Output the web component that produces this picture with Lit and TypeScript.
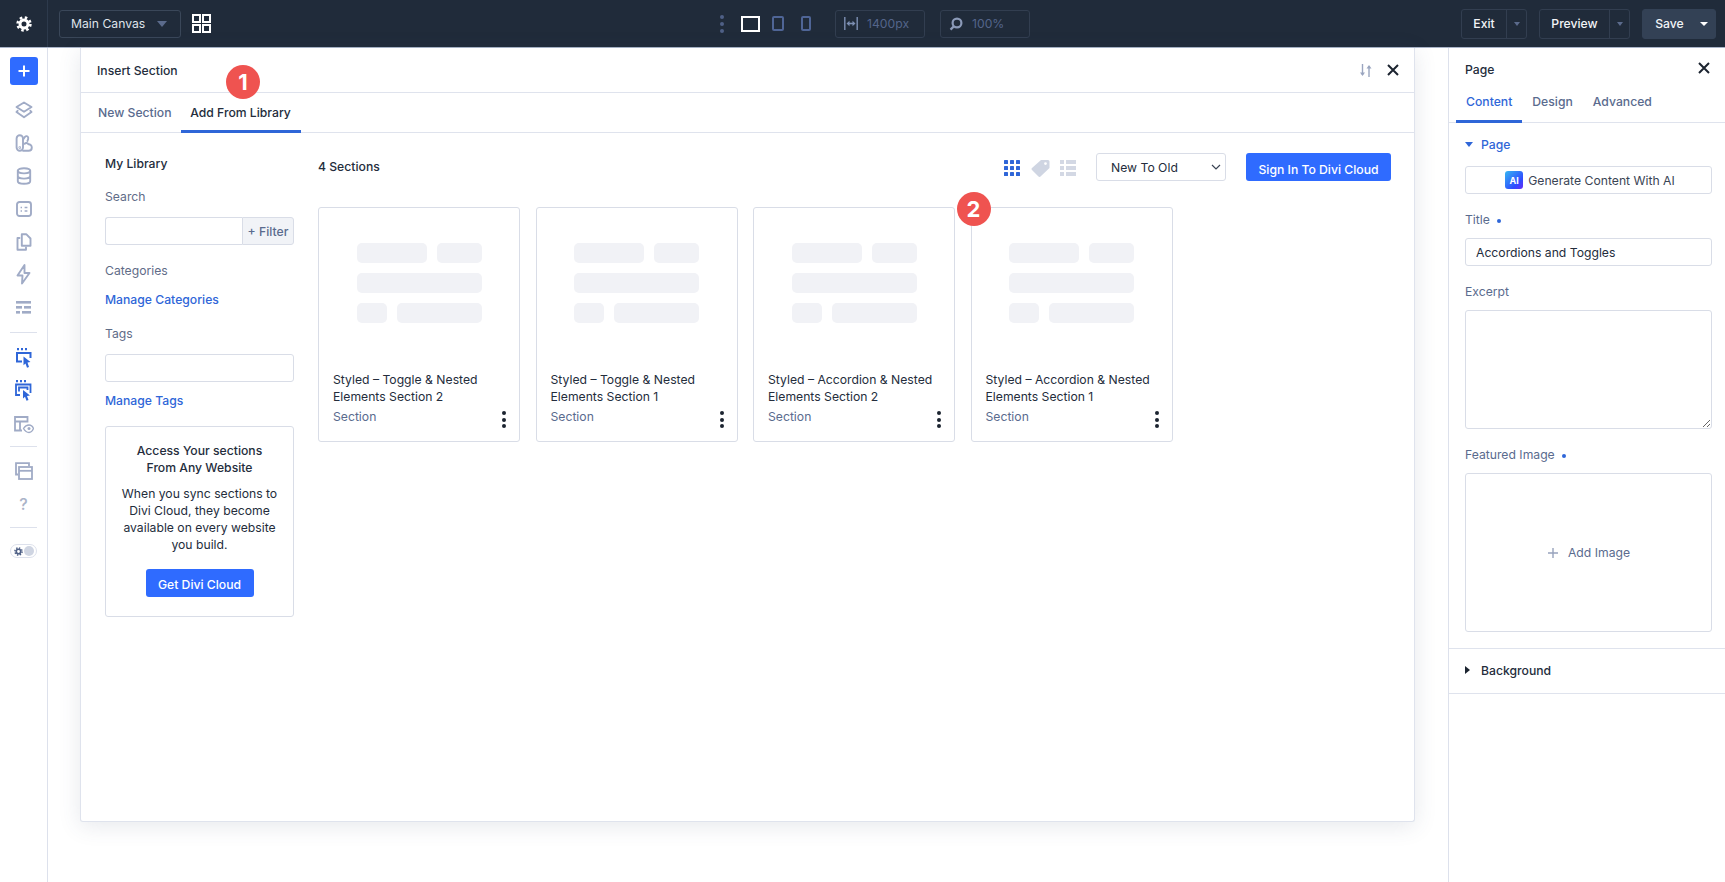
import { LitElement, css, html, svg, type TemplateResult } from "lit";
import { customElement } from "lit/decorators.js";

const side = (w: number, h: number, body: TemplateResult | ReturnType<typeof svg>) =>
  html`<svg width=${w} height=${h} viewBox="0 0 ${w} ${h}" fill="none" stroke="currentColor" stroke-width="1.9" stroke-linejoin="round" stroke-linecap="round">${body}</svg>`;

const icons = {
  gear: html`<svg width="16" height="16" viewBox="0 0 16 16" fill="none" stroke="#fff"><circle cx="8" cy="8" r="4" stroke-width="3"/><circle cx="8" cy="8" r="6.4" stroke-width="2.6" stroke-dasharray="2.5 2.53"/></svg>`,
  grid: html`<svg width="19" height="19" viewBox="0 0 19 19" fill="none" stroke="#fff" stroke-width="2"><rect x="1" y="1" width="7" height="7"/><rect x="11" y="1" width="7" height="7"/><rect x="1" y="11" width="7" height="7"/><rect x="11" y="11" width="7" height="7"/></svg>`,
  layers: side(18, 18, svg`<path d="M9 1.5 16.5 6 9 10.8 1.5 6Z"/><path d="M2.6 9.8 1.5 11 9 16.2 16.5 11 15.4 9.8"/>`),
  library: side(18, 18, svg`<rect x="1.6" y="1.2" width="6.4" height="15.6" rx="3.2"/><path d="M8 5.6 10 2.8C11 1.6 12.8 2 13.2 3.4 13.5 4.6 13 5.8 12.4 7"/><path d="M8 16.8H13.6C15.6 16.8 16.8 15.2 16.8 13.4 16.8 11.2 15 10 13.4 10.2 12.6 8.8 10.6 8.6 9.6 9.8"/><circle cx="4.8" cy="13.6" r=".4"/>`),
  db: side(16, 18, svg`<ellipse cx="8" cy="3.8" rx="6.2" ry="2.6"/><path d="M1.8 3.8V14.2C1.8 15.6 4.6 16.8 8 16.8S14.2 15.6 14.2 14.2V3.8M1.8 9C1.8 10.4 4.6 11.6 8 11.6S14.2 10.4 14.2 9"/>`),
  face: html`<svg width="16" height="16" viewBox="0 0 16 16" fill="none" stroke="currentColor" stroke-width="1.9"><rect x="1" y="1" width="14" height="14" rx="2.5"/><path d="M4.6 6.4h1.4M8.6 6.4h2.8M4.6 10h1.4M8.6 10h2.8" stroke-width="1.5"/></svg>`,
  copy: side(16, 18, svg`<path d="M5.8 1.2H10.2L14.5 5.5V12.8H5.8Z"/><path d="M3.5 5H1.5V16.8H10V14.5"/>`),
  bolt: side(15, 21, svg`<path d="M8.5 1 1.5 11.5H6.5L6 19.5 13.5 9H8.5Z"/>`),
  lines: html`<svg width="15" height="13" viewBox="0 0 15 13" fill="currentColor"><rect width="15" height="2.6"/><rect y="5" width="6" height="2.6"/><rect x="8" y="5" width="7" height="2.6"/><rect y="10" width="4" height="2.6"/><rect x="6" y="10" width="9" height="2.6"/></svg>`,
  cursor1: html`<svg width="16" height="20" viewBox="0 0 16 20" fill="none" stroke="currentColor"><path d="M1 1h2M5 1h2M9 1h2" stroke-width="2.4"/><path d="M6 13.5H1V5h13.5v5" stroke-width="2"/><path d="M7.5 8.5 14.5 14 11.5 14.6 13 19 11 19.7 9.5 15.5 7.5 17.2Z" fill="currentColor" stroke="none"/></svg>`,
  cursor2: html`<svg width="17" height="21" viewBox="0 0 17 21" fill="none" stroke="currentColor"><path d="M1 1h2M5 1h2M9 1h2" stroke-width="2.4"/><path d="M5 15H1V4.5h14.5V13" stroke-width="1.8"/><path d="M4 11.5V7.5H12.5V10" stroke-width="1.8"/><path d="M8 10 15 15.5 12 16 13.5 20 11.5 20.8 10 16.8 8 18.5Z" fill="currentColor" stroke="none"/></svg>`,
  layoutEye: html`<svg width="20" height="18" viewBox="0 0 20 18" fill="none" stroke="currentColor" stroke-width="1.8"><path d="M8 14.5H1V1h12.5v5.5M1 5.5h12.5M6 5.5v9"/><path d="M9.5 12.5C11 10 13 9 15 9s3.5 1 4.5 3.5C18.5 15 17 16.5 15 16.5s-4-1.5-5.5-4Z" stroke-width="1.4"/><circle cx="15" cy="12.6" r="1.5" fill="currentColor" stroke="none"/></svg>`,
  windows: html`<svg width="18" height="18" viewBox="0 0 18 18" fill="none" stroke="currentColor" stroke-width="1.8"><path d="M3 12.5H1V1.2h13V4"/><rect x="4" y="5" width="13" height="12"/><path d="M4 8.8h13"/></svg>`,
  widthArrows: html`<svg width="14" height="13" viewBox="0 0 14 13" fill="none"><path d="M.8 0v13M13.2 0v13" stroke="#7d8fb3" stroke-width="1.4"/><path d="M2.5 6.5 5.5 3.8v5.4ZM11.5 6.5 8.5 3.8v5.4Z" fill="#7d8fb3"/><path d="M5 6.5h4" stroke="#7d8fb3" stroke-width="1.6"/></svg>`,
  search: html`<svg width="14" height="14" viewBox="0 0 14 14" fill="none" stroke="#8b9ab8"><circle cx="8" cy="6" r="4.4" stroke-width="2.2"/><path d="M4.8 9.4 1.5 12.6" stroke-width="2.2"/></svg>`,
  sort: html`<svg width="13" height="13" viewBox="0 0 13 13" fill="none" stroke="#9aa5bf" stroke-width="1.4"><path d="M3.5 0v11"/><path d="M1 8.5 3.5 12 6 8.5Z" fill="#9aa5bf" stroke="none"/><path d="M10 13V2"/><path d="M7.5 4.5 10 1l2.5 3.5Z" fill="#9aa5bf" stroke="none"/></svg>`,
  close: html`<svg width="12" height="12" viewBox="0 0 12 12" fill="none" stroke="#1c2430" stroke-width="2"><path d="M1 1l10 10M11 1 1 11"/></svg>`,
  dotsGrid: html`<svg width="16" height="16" viewBox="0 0 16 16" fill="#2f66d8"><rect width="4" height="4" rx=".6"/><rect x="6" width="4" height="4" rx=".6"/><rect x="12" width="4" height="4" rx=".6"/><rect y="6" width="4" height="4" rx=".6"/><rect x="6" y="6" width="4" height="4" rx=".6"/><rect x="12" y="6" width="4" height="4" rx=".6"/><rect y="12" width="4" height="4" rx=".6"/><rect x="6" y="12" width="4" height="4" rx=".6"/><rect x="12" y="12" width="4" height="4" rx=".6"/></svg>`,
  tag: html`<svg class="tag" width="19" height="18" viewBox="0 0 19 18" fill="#cfd5e2"><path d="M10 1h7a1.5 1.5 0 0 1 1.5 1.5V9L9.5 17.5a1.4 1.4 0 0 1-2 0L1 11a1.4 1.4 0 0 1 0-2Zm4.5 2.2a1.4 1.4 0 1 0 0 2.8 1.4 1.4 0 0 0 0-2.8Z" fill-rule="evenodd"/></svg>`,
  list: html`<svg width="16" height="16" viewBox="0 0 16 16" fill="#d3d8e4"><rect width="4" height="4"/><rect x="6" width="10" height="4"/><rect y="6" width="4" height="4"/><rect x="6" y="6" width="10" height="4"/><rect y="12" width="4" height="4"/><rect x="6" y="12" width="10" height="4"/></svg>`,
  chevron: html`<svg width="10" height="6" viewBox="0 0 10 6" fill="none" stroke="#3a4454" stroke-width="1.2"><path d="M1 1l4 4 4-4"/></svg>`,
  plus: html`<svg width="12" height="12" viewBox="0 0 12 12" fill="none" stroke="#98a3bd" stroke-width="1.4"><path d="M6 1v10M1 6h10"/></svg>`,
};

const cards = [
  ["Styled – Toggle & Nested", "Elements Section 2"],
  ["Styled – Toggle & Nested", "Elements Section 1"],
  ["Styled – Accordion & Nested", "Elements Section 2"],
  ["Styled – Accordion & Nested", "Elements Section 1"],
];

@customElement("app-root")
export class AppRoot extends LitElement {
  render(): TemplateResult {
    return html`
      ${this.topbar()}
      <div class="body">
        ${this.sidebar()}
        <div class="canvas">${this.modal()}</div>
        ${this.panel()}
      </div>
    `;
  }

  topbar() {
    return html`<header class="top">
      <div class="gear">${icons.gear}</div>
      <div class="canvas-select">Main Canvas<span class="caret dim"></span></div>
      <div class="grid-icon">${icons.grid}</div>
      <div class="center">
        <span class="vdots"><i></i><i></i><i></i></span>
        <span class="desktop"></span>
        <span class="tablet"></span>
        <span class="phone"></span>
        <div class="box first">${icons.widthArrows}<span>1400px</span></div>
        <div class="box">${icons.search}<span>100%</span></div>
      </div>
      <div class="actions">
        <div class="split"><span class="lbl exit">Exit</span><span class="arrow"><span class="caret tiny"></span></span></div>
        <div class="split"><span class="lbl preview">Preview</span><span class="arrow"><span class="caret tiny"></span></span></div>
        <div class="split save"><span class="lbl">Save</span><span class="caret white"></span></div>
      </div>
    </header>`;
  }

  sidebar() {
    return html`<nav class="side">
      <div class="add"><svg width="12" height="12" viewBox="0 0 12 12" fill="none" stroke="#fff" stroke-width="2"><path d="M6 .5v11M.5 6h11"/></svg></div>
      <div class="si">${icons.layers}</div>
      <div class="si">${icons.library}</div>
      <div class="si">${icons.db}</div>
      <div class="si">${icons.face}</div>
      <div class="si">${icons.copy}</div>
      <div class="si">${icons.bolt}</div>
      <div class="si">${icons.lines}</div>
      <hr class="h1" />
      <div class="si blue">${icons.cursor1}</div>
      <div class="si blue">${icons.cursor2}</div>
      <div class="si eye">${icons.layoutEye}</div>
      <hr class="h2" />
      <div class="si">${icons.windows}</div>
      <div class="si q">?</div>
      <hr class="h3" />
      <div class="toggle"><span class="tg">${icons.gear}</span><span class="knob"></span></div>
    </nav>`;
  }

  modal() {
    return html`<section class="modal">
      <div class="m-head">
        <span class="m-title">Insert Section</span>
        <span class="badge one">1</span>
        <span class="m-icons">${icons.sort}${icons.close}</span>
      </div>
      <div class="m-tabs">
        <span class="m-tab">New Section</span>
        <span class="m-tab on">Add From Library</span>
      </div>
      <div class="m-body">
        <aside class="lib">
          <div class="lib-title">My Library</div>
          <div class="label search">Search</div>
          <div class="filter-row"><input /><span class="filter">+ Filter</span></div>
          <div class="label cats">Categories</div>
          <a class="link mcat">Manage Categories</a>
          <div class="label tags">Tags</div>
          <input class="tag-input" />
          <a class="link mtag">Manage Tags</a>
          <div class="promo">
            <h4>Access Your sections<br />From Any Website</h4>
            <p>When you sync sections to<br />Divi Cloud, they become<br />available on every website<br />you build.</p>
            <span class="btn small">Get Divi Cloud</span>
          </div>
        </aside>
        <div class="results">
          <div class="r-head">
            <span class="count">4 Sections</span>
            <span class="views">${icons.dotsGrid}${icons.tag}${icons.list}</span>
            <div class="order">New To Old${icons.chevron}</div>
            <span class="btn sign">Sign In To Divi Cloud</span>
          </div>
          <div class="cards">
            ${cards.map((c, i) => this.card(c, i))}
          </div>
        </div>
      </div>
    </section>`;
  }

  card(lines: string[], i: number) {
    return html`<article class="card">
      ${i === 3 ? html`<span class="badge two">2</span>` : ""}
      <div class="skel">
        <div><i class="w70"></i><i class="w45"></i></div>
        <div><i class="w125"></i></div>
        <div><i class="w30"></i><i class="w85"></i></div>
      </div>
      <div class="c-title">${lines[0]}<br />${lines[1]}</div>
      <div class="c-foot"><span>Section</span><span class="kebab"><i></i><i></i><i></i></span></div>
    </article>`;
  }

  panel() {
    return html`<aside class="panel">
      <div class="p-head"><span>Page</span>${icons.close}</div>
      <div class="p-tabs"><span class="on">Content</span><span>Design</span><span>Advanced</span></div>
      <div class="p-sec">
        <div class="sec-title"><span class="caret blue-c"></span>Page</div>
        <div class="ai"><span class="ai-logo">AI</span>Generate Content With AI</div>
        <label class="fl t">Title <b></b></label>
        <input class="p-input" value="Accordions and Toggles" />
        <label class="fl e">Excerpt</label>
        <textarea></textarea>
        <label class="fl f">Featured Image <b></b></label>
        <div class="image">${icons.plus}<span>Add Image</span></div>
      </div>
      <div class="p-bg"><span class="caret right"></span>Background</div>
    </aside>`;
  }

  static styles = css`
    :host {
      display: flex;
      flex-direction: column;
      height: 100vh;
      overflow: hidden;
      font-family: Inter, "Liberation Sans", sans-serif;
      font-size: 12.2px;
      color: #242d3c;
      background: #fff;
      -webkit-font-smoothing: antialiased;
    }
    * {
      box-sizing: border-box;
    }
    .caret {
      display: inline-block;
      width: 0;
      height: 0;
      border-left: 5px solid transparent;
      border-right: 5px solid transparent;
      border-top: 6px solid #5b6b8c;
    }
    .caret.tiny {
      border-left-width: 3.5px;
      border-right-width: 3.5px;
      border-top-width: 4px;
    }
    .caret.white {
      border-left-width: 4px;
      border-right-width: 4px;
      border-top: 4px solid #fff;
    }

    /* top bar */
    .top {
      flex: none;
      height: 48px;
      display: flex;
      align-items: center;
      background: #202b3a;
      color: #fff;
      border-bottom: 1px solid #a9b4c8;
    }
    .gear {
      width: 48px;
      height: 100%;
      display: flex;
      align-items: center;
      justify-content: center;
      border-right: 1px solid #2d3a4c;
    }
    .canvas-select {
      margin-left: 11px;
      width: 122px;
      height: 28px;
      padding: 0 13px 0 11px;
      display: flex;
      align-items: center;
      justify-content: space-between;
      border: 1px solid #3a4759;
      border-radius: 3px;
      color: #dfe3ea;
    }
    .grid-icon {
      margin-left: 11px;
      display: flex;
    }
    .center {
      margin-left: 509px;
      display: flex;
      align-items: center;
    }
    .vdots {
      display: flex;
      flex-direction: column;
      gap: 3px;
      margin-right: 17px;
    }
    .vdots i {
      width: 4px;
      height: 4px;
      border-radius: 50%;
      background: #4f6086;
    }
    .desktop {
      width: 19px;
      height: 16px;
      border: 2px solid #fff;
      margin-right: 12px;
    }
    .tablet,
    .phone {
      height: 15px;
      border: 2px solid #4f6596;
      border-radius: 2px;
    }
    .tablet {
      width: 12px;
      margin-right: 17px;
    }
    .phone {
      width: 10px;
      margin-right: 24px;
    }
    .box {
      width: 90px;
      height: 28px;
      padding-left: 8px;
      display: flex;
      align-items: center;
      gap: 9px;
      border: 1px solid #323e50;
      border-radius: 3px;
      color: #54658a;
    }
    .box.first {
      margin-right: 15px;
    }
    .actions {
      margin-left: auto;
      margin-right: 9px;
      display: flex;
      gap: 12px;
    }
    .split {
      height: 30px;
      display: flex;
      align-items: center;
      border: 1px solid #323e50;
      border-radius: 3px;
      font-weight: 500;
      color: #f2f4f7;
    }
    .lbl {
      height: 100%;
      display: flex;
      align-items: center;
      justify-content: center;
    }
    .exit {
      width: 45px;
      border-right: 1px solid #323e50;
    }
    .preview {
      width: 70px;
      border-right: 1px solid #323e50;
    }
    .arrow {
      width: 19px;
      display: flex;
      justify-content: center;
    }
    .save {
      width: 74px;
      padding-right: 7px;
      justify-content: space-between;
      background: #334155;
      border-color: #334155;
    }
    .save .lbl {
      width: 47px;
      padding-left: 6px;
    }

    /* layout */
    .body {
      flex: 1;
      display: flex;
      min-height: 0;
    }
    .side {
      flex: none;
      width: 48px;
      padding-top: 9px;
      display: flex;
      flex-direction: column;
      align-items: center;
      border-right: 1px solid #dde1ec;
      color: #a0abc6;
    }
    .add {
      width: 28px;
      height: 28px;
      margin-bottom: 8px;
      display: flex;
      align-items: center;
      justify-content: center;
      background: #2f6bff;
      border-radius: 3px;
    }
    .si {
      flex: none;
      height: 33px;
      display: flex;
      align-items: center;
      justify-content: center;
    }
    .si.blue {
      color: #2f66d8;
    }
    .si.eye {
      margin-top: 1px;
    }
    .si.q {
      font-size: 16px;
      font-weight: 500;
      color: #aab3c8;
    }
    .side hr {
      width: 27px;
      border: 0;
      border-top: 1px solid #dde1ec;
    }
    .h1 {
      margin: 8px 0;
    }
    .h2 {
      margin: 5px 0 7px;
    }
    .h3 {
      margin: 7px 0 16px;
    }
    .toggle {
      width: 27px;
      height: 14px;
      padding: 0 2px 0 3px;
      display: flex;
      align-items: center;
      justify-content: space-between;
      border: 1px solid #dde1ec;
      border-radius: 7px;
    }
    .tg svg {
      display: block;
      width: 9px;
      height: 9px;
    }
    .tg svg * {
      stroke: #4f6086;
    }
    .knob {
      width: 10px;
      height: 10px;
      border-radius: 50%;
      background: #cfd5e2;
    }
    .canvas {
      flex: 1;
      min-width: 0;
      padding: 0 33px 60px 32px;
    }

    /* modal */
    .modal {
      height: 100%;
      display: flex;
      flex-direction: column;
      background: #fff;
      border: 1px solid #dfe3ed;
      border-top: 0;
      border-radius: 0 0 3px 3px;
      box-shadow: 0 4px 22px rgba(60, 75, 110, 0.13);
    }
    .m-head {
      position: relative;
      flex: none;
      height: 45px;
      padding: 0 15px 0 16px;
      display: flex;
      align-items: center;
      justify-content: space-between;
      border-bottom: 1px solid #dfe3ed;
    }
    .m-title {
      font-weight: 500;
    }
    .m-icons {
      display: flex;
      align-items: center;
      gap: 15px;
    }
    .badge {
      position: absolute;
      width: 34px;
      height: 34px;
      display: flex;
      align-items: center;
      justify-content: center;
      border-radius: 50%;
      background: #ef5350;
      color: #fff;
      font-size: 22px;
      font-weight: 700;
      z-index: 2;
    }
    .badge.one {
      left: 145px;
      top: 17px;
    }
    .badge.two {
      left: -15px;
      top: -16px;
    }
    .m-tabs {
      flex: none;
      height: 40px;
      padding-left: 8px;
      display: flex;
      border-bottom: 1px solid #dfe3ed;
    }
    .m-tab {
      padding: 0 9px;
      display: flex;
      align-items: center;
      font-weight: 500;
      color: #5a6b8e;
      white-space: nowrap;
    }
    .m-tab.on {
      width: 120px;
      justify-content: center;
      color: #242d3c;
      border-bottom: 3px solid #2f66d8;
      margin-bottom: -1px;
      padding-top: 2px;
    }
    .m-body {
      flex: 1;
      display: flex;
      padding: 0 23px 0 24px;
    }
    .lib {
      flex: none;
      width: 189px;
      display: flex;
      flex-direction: column;
      padding-top: 23px;
    }
    .lib-title {
      height: 16px;
      line-height: 16px;
      font-weight: 500;
    }
    .label {
      line-height: 16px;
      color: #5f6c88;
    }
    .label.search {
      margin-top: 17px;
    }
    .filter-row {
      margin-top: 12px;
      height: 28px;
      display: flex;
    }
    input,
    textarea {
      display: block;
      font: inherit;
      color: inherit;
      border: 1px solid #d9dde7;
      border-radius: 3px;
      background: #fff;
      outline: 0;
    }
    .filter-row input {
      flex: 1;
      min-width: 0;
      border-radius: 3px 0 0 3px;
      border-right: 0;
    }
    .filter {
      width: 52px;
      display: flex;
      align-items: center;
      justify-content: center;
      background: #f1f3f7;
      border: 1px solid #d9dde7;
      border-radius: 0 3px 3px 0;
      color: #5a6b8e;
      font-weight: 500;
    }
    .label.cats {
      margin-top: 18px;
    }
    .link {
      line-height: 16px;
      color: #2f66d8;
      font-weight: 500;
    }
    .mcat {
      margin-top: 13px;
    }
    .label.tags {
      margin-top: 18px;
    }
    .tag-input {
      margin-top: 12px;
      height: 28px;
      width: 100%;
    }
    .mtag {
      margin-top: 11px;
    }
    .promo {
      margin-top: 17px;
      height: 191px;
      padding-top: 15px;
      display: flex;
      flex-direction: column;
      align-items: center;
      text-align: center;
      border: 1px solid #d9dde7;
      border-radius: 3px;
      line-height: 17px;
    }
    .promo h4 {
      margin: 0;
      font-size: inherit;
      font-weight: 500;
    }
    .promo p {
      margin: 9px 0 0;
    }
    .btn {
      display: flex;
      align-items: center;
      justify-content: center;
      background: #2f6bff;
      color: #fff;
      font-weight: 500;
      border-radius: 3px;
    }
    .btn.small {
      margin-top: 16px;
      width: 108px;
      height: 28px;
      padding-top: 3px;
    }
    .results {
      flex: 1;
      margin-left: 24px;
      min-width: 0;
    }
    .r-head {
      height: 74px;
      padding-top: 20px;
      display: flex;
      align-items: flex-start;
    }
    .count {
      margin-top: 6px;
      font-weight: 500;
    }
    .views {
      margin-left: auto;
      margin-top: 6px;
      display: flex;
      gap: 10px;
      align-items: center;
    }
    .tag {
      margin-left: 1px;
    }
    .order {
      margin-left: 20px;
      width: 130px;
      height: 28px;
      padding: 0 4px 0 14px;
      display: flex;
      align-items: center;
      justify-content: space-between;
      border: 1px solid #d9dde7;
      border-radius: 3px;
    }
    .btn.sign {
      margin-left: 20px;
      width: 145px;
      height: 28px;
      padding-top: 5px;
    }
    .cards {
      display: flex;
      gap: 15.5px;
    }
    .card {
      position: relative;
      width: 202px;
      height: 235px;
      padding: 35px 14px 0;
      border: 1px solid #d9dde7;
      border-radius: 3px;
    }
    .skel {
      height: 128px;
      margin: 0 auto;
      width: 125px;
      display: flex;
      flex-direction: column;
      gap: 10px;
    }
    .skel div {
      display: flex;
      gap: 10px;
    }
    .skel i {
      height: 20px;
      border-radius: 5px;
      background: #f1f2f6;
    }
    .w70 {
      width: 70px;
    }
    .w45 {
      width: 45px;
    }
    .w125 {
      width: 125px;
    }
    .w30 {
      width: 30px;
    }
    .w85 {
      width: 85px;
    }
    .c-title {
      margin-top: 1px;
      line-height: 16.5px;
      white-space: nowrap;
    }
    .c-foot {
      margin-top: 3px;
      display: flex;
      justify-content: space-between;
      color: #5a6b8e;
      line-height: 17px;
    }
    .kebab {
      margin: 3px -1px 0 0;
      display: flex;
      flex-direction: column;
      gap: 2.5px;
    }
    .kebab i {
      width: 4px;
      height: 4px;
      border-radius: 50%;
      background: #1c2430;
    }

    /* right panel */
    .panel {
      flex: none;
      width: 277px;
      border-left: 1px solid #dde1ec;
    }
    .p-head {
      height: 32px;
      padding: 14px 15px 0 16px;
      display: flex;
      justify-content: space-between;
      align-items: flex-start;
      font-weight: 500;
    }
    .p-tabs {
      height: 43px;
      padding: 0 0 0 7px;
      display: flex;
      border-bottom: 1px solid #dfe3ed;
      font-weight: 500;
      color: #5a6b8e;
    }
    .p-tabs span {
      padding: 14px 10px 0;
    }
    .p-tabs .on {
      color: #2f66d8;
      border-bottom: 3px solid #2f66d8;
      margin-bottom: -1px;
    }
    .p-sec {
      padding: 13px 13px 16px 16px;
      border-bottom: 1px solid #dfe3ed;
    }
    .sec-title {
      height: 16px;
      display: flex;
      align-items: center;
      gap: 8px;
      color: #2f66d8;
      font-weight: 500;
    }
    .caret.blue-c {
      border-top-color: #2f66d8;
      border-left-width: 4px;
      border-right-width: 4px;
      border-top-width: 5px;
    }
    .ai {
      margin-top: 14px;
      height: 28px;
      padding-left: 3px;
      display: flex;
      align-items: center;
      justify-content: center;
      gap: 5px;
      border: 1px solid #d9dde7;
      border-radius: 3px;
      color: #3a4454;
    }
    .ai-logo {
      flex: none;
      width: 18px;
      height: 18px;
      display: flex;
      align-items: center;
      justify-content: center;
      border-radius: 3px;
      background: linear-gradient(135deg, #35b6f2, #2f4bff 70%, #6a2bf5);
      color: #fff;
      font-size: 9px;
      font-weight: 700;
    }
    .fl {
      display: block;
      line-height: 16px;
      color: #5a6b8e;
    }
    .fl b {
      display: inline-block;
      width: 4px;
      height: 4px;
      margin-left: 4px;
      vertical-align: middle;
      border-radius: 50%;
      background: #2f66d8;
    }
    .fl.t {
      margin-top: 18px;
    }
    .p-input {
      margin-top: 10px;
      width: 100%;
      height: 28px;
      padding: 0 10px;
      color: #242d3c;
    }
    .fl.e {
      margin-top: 18px;
    }
    textarea {
      margin-top: 10px;
      width: 100%;
      height: 119px;
    }
    .fl.f {
      margin-top: 18px;
    }
    .image {
      margin-top: 10px;
      height: 159px;
      display: flex;
      align-items: center;
      justify-content: center;
      gap: 9px;
      border: 1px solid #d9dde7;
      border-radius: 3px;
      color: #5a6b8e;
    }
    .p-bg {
      height: 45px;
      padding: 0 0 2px 16px;
      display: flex;
      align-items: center;
      gap: 11px;
      font-weight: 500;
      border-bottom: 1px solid #dfe3ed;
    }
    .caret.right {
      border-top: 4px solid transparent;
      border-bottom: 4px solid transparent;
      border-left: 5px solid #1c2430;
      border-right: 0;
    }
  `;
}
